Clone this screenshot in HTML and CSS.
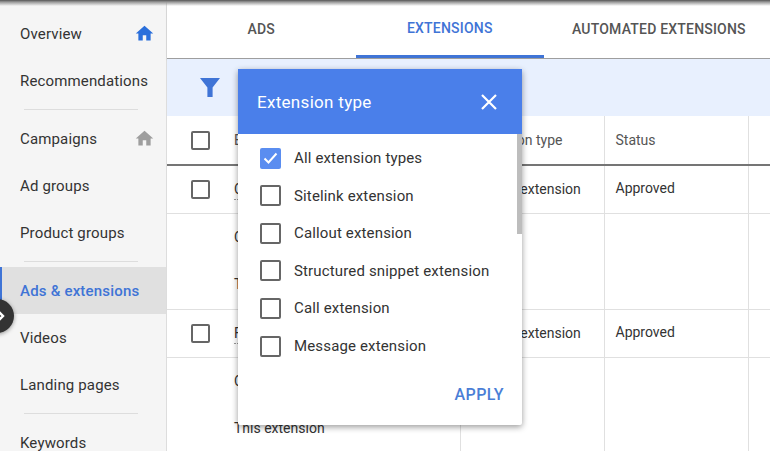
FILE: index.html
```html
<!DOCTYPE html>
<html lang="en">
<head>
  <meta charset="UTF-8">
  <meta name="viewport" content="width=device-width, initial-scale=1">
  <title>Ads &amp; extensions</title>
  <link rel="stylesheet" href="styles.css">
</head>
<body>
  <div class="app">
    <div class="top-shade"></div>

    <!-- Side menu -->
    <nav class="sidebar">
      <a class="nav-item">Overview
        <svg class="nav-icon active" viewBox="0 0 24 24"><path d="M10 20v-6h4v6h5v-8h3L12 3 2 12h3v8z"/></svg>
      </a>
      <a class="nav-item">Recommendations</a>
      <div class="nav-divider"></div>
      <a class="nav-item">Campaigns
        <svg class="nav-icon" viewBox="0 0 24 24"><path d="M10 20v-6h4v6h5v-8h3L12 3 2 12h3v8z"/></svg>
      </a>
      <a class="nav-item">Ad groups</a>
      <a class="nav-item">Product groups</a>
      <div class="nav-divider"></div>
      <a class="nav-item selected">Ads &amp; extensions</a>
      <a class="nav-item">Videos</a>
      <a class="nav-item">Landing pages</a>
      <div class="nav-divider"></div>
      <a class="nav-item">Keywords</a>
    </nav>

    <div class="expand-btn">
      <svg viewBox="0 0 12 16"><path d="M2 2l6 6-6 6" fill="none" stroke="#fff" stroke-width="2.4"/></svg>
    </div>

    <main class="main">
      <div class="tabs">
        <div class="tab">ADS</div>
        <div class="tab current">EXTENSIONS</div>
        <div class="tab wide">AUTOMATED EXTENSIONS</div>
      </div>

      <div class="filter-bar">
        <svg class="filter-icon" viewBox="0 0 20 19"><path d="M0 0h20l-7.4 9.5V19H7.4V9.5z"/></svg>
      </div>

      <table class="grid">
        <colgroup>
          <col class="col-check">
          <col class="col-ext">
          <col class="col-type">
          <col class="col-status">
          <col>
        </colgroup>
        <thead>
          <tr>
            <th><span class="box"></span></th>
            <th>Extension</th>
            <th class="line">Extension type</th>
            <th class="line">Status</th>
            <th class="line"></th>
          </tr>
        </thead>
        <tbody>
          <tr class="short">
            <td><span class="box"></span></td>
            <td><span class="dotted">Call us</span></td>
            <td class="line">Sitelink extension</td>
            <td class="line raised">Approved</td>
            <td class="line"></td>
          </tr>
          <tr class="tall">
            <td></td>
            <td><p>Call us</p><p>This extension</p></td>
            <td class="line"></td>
            <td class="line"></td>
            <td class="line"></td>
          </tr>
          <tr class="short">
            <td><span class="box"></span></td>
            <td><span class="dotted">Free quote</span></td>
            <td class="line">Sitelink extension</td>
            <td class="line raised">Approved</td>
            <td class="line"></td>
          </tr>
          <tr class="tall">
            <td></td>
            <td><p>Call us</p><p>This extension</p></td>
            <td class="line"></td>
            <td class="line"></td>
            <td class="line"></td>
          </tr>
        </tbody>
      </table>
    </main>

    <!-- Extension type dialog -->
    <div class="dialog">
      <div class="dialog-head">
        <span>Extension type</span>
        <svg class="close" viewBox="0 0 16 16"><path d="M1 1l14 14M15 1L1 15" stroke="#fff" stroke-width="2.2"/></svg>
      </div>
      <div class="dialog-body">
        <div class="thumb"></div>
        <label class="option">
          <span class="box large checked">
            <svg viewBox="0 0 21 21"><path d="M4.5 10.5l4 4 8-9" fill="none" stroke="#fff" stroke-width="2"/></svg>
          </span>
          All extension types
        </label>
        <label class="option"><span class="box large"></span>Sitelink extension</label>
        <label class="option"><span class="box large"></span>Callout extension</label>
        <label class="option"><span class="box large"></span>Structured snippet extension</label>
        <label class="option"><span class="box large"></span>Call extension</label>
        <label class="option"><span class="box large"></span>Message extension</label>
        <div class="dialog-foot"><button class="apply">APPLY</button></div>
      </div>
    </div>
  </div>
</body>
</html>
```

FILE: styles.css
```css
* {
  box-sizing: border-box;
}
body {
  margin: 0;
  font-family: Roboto, sans-serif;
  color: #333;
  background: #fff;
}
.app {
  position: relative;
  display: flex;
  width: 770px;
  height: 451px;
  overflow: hidden;
}
.top-shade {
  position: absolute;
  top: 0;
  left: 0;
  right: 0;
  height: 6px;
  background: linear-gradient(to bottom, #555 0, #999 2px, rgba(255,255,255,0) 6px);
  z-index: 5;
}

/* side menu */
.sidebar {
  flex: 0 0 167px;
  padding-top: 10px;
  background: #f5f5f5;
  border-right: 1px solid #ddd;
}
.nav-item {
  display: flex;
  align-items: center;
  justify-content: space-between;
  height: 47px;
  padding: 0 12px 0 20px;
  font-size: 15px;
  letter-spacing: 0.15px;
  color: #333;
}
.nav-item.selected {
  background: #e0e0e0;
  border-left: 2px solid #3f74d6;
  padding-left: 18px;
  color: #3f74d6;
  font-weight: 500;
  letter-spacing: 0.2px;
}
.nav-icon {
  width: 21px;
  height: 21px;
  margin-right: -1px;
  fill: #9e9e9e;
}
.nav-icon.active {
  fill: #2a6fdb;
}
.nav-divider {
  height: 1px;
  margin: 5px 28px 5px 24px;
  background: #ddd;
}
.expand-btn {
  position: absolute;
  left: -20px;
  top: 299px;
  width: 34px;
  height: 34px;
  display: flex;
  align-items: center;
  justify-content: flex-end;
  padding-right: 7px;
  border-radius: 50%;
  background: #333;
  box-shadow: 0 1px 4px rgba(0,0,0,0.4);
  z-index: 4;
}
.expand-btn svg {
  width: 12px;
  height: 16px;
}

/* tabs */
.main {
  flex: 1;
  min-width: 0;
}
.tabs {
  display: flex;
  height: 59px;
  border-bottom: 1px solid #9e9e9e;
  box-shadow: 0 1px 2px rgba(0,0,0,0.1);
}
.tab {
  flex: 0 0 188.5px;
  display: flex;
  align-items: center;
  justify-content: center;
  padding-bottom: 1px;
  font-size: 14px;
  font-weight: 500;
  letter-spacing: 0.2px;
  color: #555;
}
.tab.current {
  color: #3f74d6;
  border-bottom: 3px solid #3f74d6;
  padding-top: 2px;
}
.tab.wide {
  flex: 0 0 auto;
  padding-left: 28px;
  white-space: nowrap;
}

/* filter row */
.filter-bar {
  display: flex;
  align-items: center;
  height: 57px;
  padding-left: 33px;
  background: #e8f0fe;
}
.filter-icon {
  width: 20px;
  height: 19px;
  fill: #3f74d6;
}

/* table */
.grid {
  width: 603px;
  table-layout: fixed;
  border-collapse: collapse;
  font-size: 14px;
}
.col-check {
  width: 55px;
}
.col-ext {
  width: 238px;
}
.col-type,
.col-status {
  width: 144px;
}
.grid th {
  height: 49px;
  padding: 0 0 0 11px;
  text-align: left;
  font-weight: 400;
  color: #555;
  border-bottom: 2px solid #757575;
}
.grid td {
  padding: 0 0 0 11px;
  border-bottom: 1px solid #e0e0e0;
}
.grid th:nth-child(2),
.grid td:nth-child(2) {
  padding-left: 12px;
}
.grid th:first-child,
.grid td:first-child {
  padding: 0 0 0 24px;
}
.grid .line {
  border-left: 1px solid #e0e0e0;
}
.short {
  height: 48px;
}
.tall {
  height: 96px;
}
.raised {
  padding-bottom: 3px !important;
}
.tall p {
  margin: 0;
  height: 47px;
  line-height: 47px;
}
.dotted {
  border-bottom: 1px dotted #999;
  padding-bottom: 2px;
}
.box {
  display: block;
  width: 19px;
  height: 19px;
  border: 2px solid #666;
  border-radius: 2px;
  background: #fff;
}
.box.large {
  flex: 0 0 21px;
  width: 21px;
  height: 21px;
}
.box.checked {
  border: 0;
  background: #5a8df0;
}
.box svg {
  display: block;
}

/* dialog */
.dialog {
  position: absolute;
  left: 238px;
  top: 69px;
  width: 284px;
  height: 356px;
  display: flex;
  flex-direction: column;
  background: #fff;
  border-radius: 2px;
  box-shadow: 0 2px 6px rgba(0,0,0,0.4);
  z-index: 3;
}
.dialog-head {
  display: flex;
  align-items: center;
  justify-content: space-between;
  flex: 0 0 65px;
  padding: 0 25px 0 19px;
  background: #4a7fea;
  color: #fff;
  font-size: 17px;
  letter-spacing: 0.3px;
}
.close {
  width: 16px;
  height: 16px;
}
.dialog-body {
  position: relative;
  flex: 1;
  padding-top: 5.3px;
  font-size: 15px;
  letter-spacing: 0.15px;
}
.thumb {
  position: absolute;
  right: 0;
  top: 0;
  width: 5px;
  height: 100px;
  background: #bdbdbd;
}
.option {
  display: flex;
  align-items: center;
  gap: 13px;
  height: 37.6px;
  padding-left: 22px;
}
.dialog-foot {
  display: flex;
  justify-content: flex-end;
  padding: 20px 18px 0 0;
}
.apply {
  padding: 0;
  border: none;
  background: none;
  font-family: inherit;
  font-size: 16px;
  font-weight: 500;
  letter-spacing: 0.4px;
  color: #4a7ed6;
}
```
